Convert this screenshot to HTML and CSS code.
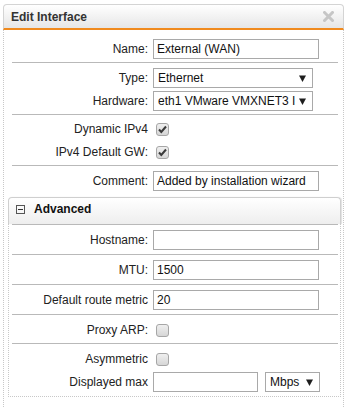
FILE: index.html
```html
<!DOCTYPE html>
<html lang="en">
  <head>
    <meta charset="UTF-8" />
    <title>Edit Interface</title>
    <link rel="stylesheet" href="styles.css">
  </head>
  <body>
    <div class="dialog">
      <div class="dialog-head">
        <span class="dialog-title">Edit Interface</span>
        <svg class="dialog-close" width="11" height="11" viewBox="0 0 11 11">
          <path d="M1.5 1.5 L9.5 9.5 M9.5 1.5 L1.5 9.5" stroke="#c6c6c6" stroke-width="3" stroke-linecap="square" />
        </svg>
      </div>

      <div class="dialog-body">
        <div class="row first">
          <div class="line">
            <label class="lbl">Name:</label>
            <div class="input">External (WAN)</div>
          </div>
        </div>

        <div class="row group">
          <div class="line">
            <label class="lbl">Type:</label>
            <div class="select">
              <span class="select-text">Ethernet</span>
              <svg class="select-arrow" width="7" height="7" viewBox="0 0 7 7"><polygon points="0,0.5 7,0.5 3.5,7" fill="#1e1e1e" /></svg>
            </div>
          </div>
          <div class="line">
            <label class="lbl">Hardware:</label>
            <div class="select">
              <span class="select-text">eth1 VMware VMXNET3 I</span>
              <svg class="select-arrow" width="7" height="7" viewBox="0 0 7 7"><polygon points="0,0.5 7,0.5 3.5,7" fill="#1e1e1e" /></svg>
            </div>
          </div>
        </div>

        <div class="row group checks">
          <div class="line">
            <label class="lbl">Dynamic IPv4</label>
            <span class="check">
              <svg width="13" height="13" viewBox="0 0 13 13"><path d="M3 6.5 L5.3 9 L10 3.5" fill="none" stroke="#3a3a3a" stroke-width="2" /></svg>
            </span>
          </div>
          <div class="line">
            <label class="lbl">IPv4 Default GW:</label>
            <span class="check">
              <svg width="13" height="13" viewBox="0 0 13 13"><path d="M3 6.5 L5.3 9 L10 3.5" fill="none" stroke="#3a3a3a" stroke-width="2" /></svg>
            </span>
          </div>
        </div>

        <div class="row last">
          <div class="line">
            <label class="lbl">Comment:</label>
            <div class="input">Added by installation wizard</div>
          </div>
        </div>

        <div class="advanced">
          <div class="adv-head">
            <span class="toggle"></span>
            <span class="adv-title">Advanced</span>
          </div>
          <div class="adv-body">
            <div class="row">
              <div class="line">
                <label class="lbl">Hostname:</label>
                <div class="input"></div>
              </div>
            </div>
            <div class="row">
              <div class="line">
                <label class="lbl">MTU:</label>
                <div class="input">1500</div>
              </div>
            </div>
            <div class="row">
              <div class="line">
                <label class="lbl">Default route metric</label>
                <div class="input">20</div>
              </div>
            </div>
            <div class="row check-row">
              <div class="line">
                <label class="lbl">Proxy ARP:</label>
                <span class="check"></span>
              </div>
            </div>
            <div class="row group last">
              <div class="line">
                <label class="lbl">Asymmetric</label>
                <span class="check"></span>
              </div>
              <div class="line">
                <label class="lbl">Displayed max</label>
                <div class="input short"></div>
                <div class="select unit">
                  <span class="select-text">Mbps</span>
                  <svg class="select-arrow" width="7" height="7" viewBox="0 0 7 7"><polygon points="0,0.5 7,0.5 3.5,7" fill="#1e1e1e" /></svg>
                </div>
              </div>
            </div>
          </div>
        </div>
      </div>
    </div>
  </body>
</html>
```

FILE: styles.css
```css
body {
  margin: 0;
  background: #fff;
  font-family: "Liberation Sans", Arial, sans-serif;
  font-size: 12px;
  color: #222;
}

.dialog {
  width: 341px;
  margin: 4px 0 0 3px;
}

.dialog-head {
  display: flex;
  align-items: center;
  justify-content: space-between;
  height: 23px;
  border: 1px solid #d4d4d4;
  border-bottom: 2px solid #f08a1e;
  border-radius: 4px 4px 0 0;
  background: linear-gradient(#ffffff, #e6e6e6);
  padding: 0 9px 0 7px;
}

.dialog-title {
  font-weight: bold;
  color: #333;
}

.dialog-body {
  border-left: 1px dotted #c8c8c8;
  border-right: 1px dotted #c8c8c8;
  padding: 4px 5px 20px 8px;
}

.row {
  display: flex;
  flex-direction: column;
  gap: 3px;
  padding: 5px 0 4px;
  border-bottom: 1px solid #b9b9b9;
}

.row.first,
.row.group,
.row.check-row {
  padding-bottom: 3px;
}

.row.checks {
  padding-top: 4px;
}

.row.last {
  border-bottom: none;
  padding-bottom: 0;
}

.line {
  display: flex;
  align-items: center;
  height: 20px;
}

.lbl {
  width: 136px;
  margin-right: 5px;
  text-align: right;
  white-space: nowrap;
}

.input {
  box-sizing: border-box;
  width: 166px;
  height: 20px;
  line-height: 18px;
  padding: 0 3px;
  border: 1px solid #a9a9a9;
  background: #fff;
  color: #111;
  white-space: nowrap;
  overflow: hidden;
}

.input.short {
  width: 105px;
}

.select {
  box-sizing: border-box;
  display: flex;
  align-items: center;
  width: 160px;
  height: 20px;
  padding: 0 6px 0 4px;
  border: 1px solid #a9a9a9;
  background: #fff;
  color: #111;
}

.select-text {
  flex: 1;
  white-space: nowrap;
  overflow: hidden;
}

.select-arrow {
  margin-left: 4px;
}

.select.unit {
  width: 55px;
  margin-left: 7px;
}

.check {
  box-sizing: border-box;
  display: block;
  width: 13px;
  height: 13px;
  margin-left: 3px;
  border: 1px solid #a6a6a6;
  border-radius: 3px;
  background: linear-gradient(#efefef, #d6d6d6);
  position: relative;
}

.check svg {
  position: absolute;
  top: -1px;
  left: -1px;
}

.advanced {
  margin: 6px -3px 0 -4px;
}

.adv-head {
  display: flex;
  align-items: center;
  height: 22px;
  border: 1px solid #cfcfcf;
  border-bottom: none;
  border-radius: 4px 4px 0 0;
  background: linear-gradient(#ffffff, #eeeeee);
  box-shadow: 1px 0 1px rgba(0, 0, 0, 0.12);
  padding: 0 0 4px 7px;
}

.toggle {
  box-sizing: border-box;
  width: 9px;
  height: 9px;
  border: 1px solid #555;
  margin-right: 9px;
  position: relative;
}

.toggle::after {
  content: "";
  position: absolute;
  left: 1px;
  right: 1px;
  top: 3px;
  height: 1px;
  background: #333;
}

.adv-title {
  font-weight: bold;
  color: #111;
}

.adv-body {
  border: 1px dotted #c8c8c8;
  border-top: none;
  padding: 0 2px 0 3px;
}

.adv-body .row:first-child {
  border-top: 1px solid #b9b9b9;
}

.adv-body .row.last {
  padding-bottom: 4px;
}
```
